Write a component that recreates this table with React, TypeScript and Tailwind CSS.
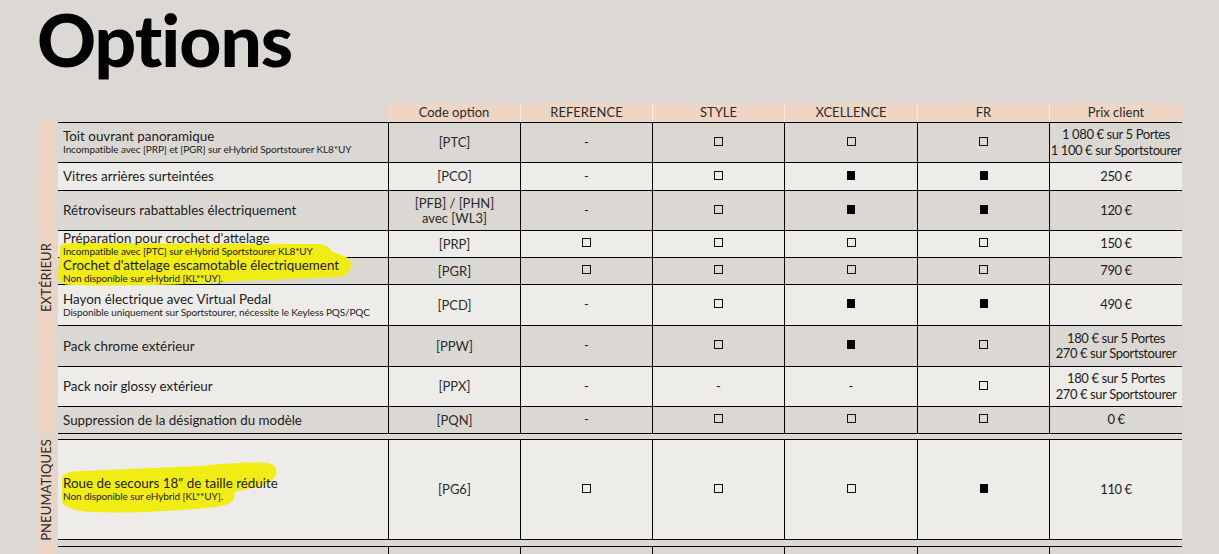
import React from 'react';

type Mark = 'o' | 'x' | '-';

interface Row {
    title: string;
    sub?: string;
    code: string[];
    marks: Mark[];
    price: string[];
    h: string;
    light?: boolean;
}

const exterieur: Row[] = [
    { title: 'Toit ouvrant panoramique', sub: 'Incompatible avec [PRP] et [PGR] sur eHybrid Sportstourer KL8*UY', code: ['[PTC]'], marks: ['-', 'o', 'o', 'o'], price: ['1 080 € sur 5 Portes', '1 100 € sur Sportstourer'], h: 'h-[40px]' },
    { title: 'Vitres arrières surteintées', code: ['[PCO]'], marks: ['-', 'o', 'x', 'x'], price: ['250 €'], h: 'h-[28px]', light: true },
    { title: 'Rétroviseurs rabattables électriquement', code: ['[PFB] / [PHN]', 'avec [WL3]'], marks: ['-', 'o', 'x', 'x'], price: ['120 €'], h: 'h-[40px]' },
    { title: "Préparation pour crochet d'attelage", sub: 'Incompatible avec [PTC] sur eHybrid Sportstourer KL8*UY', code: ['[PRP]'], marks: ['o', 'o', 'o', 'o'], price: ['150 €'], h: 'h-[27px]', light: true },
    { title: "Crochet d'attelage escamotable électriquement", sub: 'Non disponible sur eHybrid [KL**UY].', code: ['[PGR]'], marks: ['o', 'o', 'o', 'o'], price: ['790 €'], h: 'h-[27px]' },
    { title: 'Hayon électrique avec Virtual Pedal', sub: 'Disponible uniquement sur Sportstourer, nécessite le Keyless PQS/PQC', code: ['[PCD]'], marks: ['-', 'o', 'x', 'x'], price: ['490 €'], h: 'h-[41px]', light: true },
    { title: 'Pack chrome extérieur', code: ['[PPW]'], marks: ['-', 'o', 'x', 'o'], price: ['180 € sur 5 Portes', '270 € sur Sportstourer'], h: 'h-[41px]' },
    { title: 'Pack noir glossy extérieur', code: ['[PPX]'], marks: ['-', '-', '-', 'o'], price: ['180 € sur 5 Portes', '270 € sur Sportstourer'], h: 'h-[40px]', light: true },
    { title: 'Suppression de la désignation du modèle', code: ['[PQN]'], marks: ['-', 'o', 'o', 'o'], price: ['0 €'], h: 'h-[27px]' },
];

const pneus: Row[] = [
    { title: 'Roue de secours 18" de taille réduite', sub: 'Non disponible sur eHybrid [KL**UY].', code: ['[PG6]'], marks: ['o', 'o', 'o', 'x'], price: ['110 €'], h: 'h-[100px]', light: true },
];

const next: Row[] = [
    { title: '', code: [''], marks: ['-', '-', '-', '-'], price: [''], h: 'h-[40px]' },
];

const grid = 'grid grid-cols-[330px_132px_132px_132px_133px_132px_133px]';

function MarkCell({ m }: { m: Mark }) {
    if (m === '-') return <span className="text-[13px] text-[#222]">-</span>;
    if (m === 'x') return <span className="block w-[8px] h-[9px] bg-black -mt-[3px]" />;
    return <span className="block w-[9px] h-[9px] border border-[#111] -mt-[3px]" />;
}

function TableRow({ row, hideMarks }: { row: Row; hideMarks?: boolean }) {
    const bg = row.light ? 'bg-[#eeece9]' : 'bg-[#dbd8d3]';
    return (
        <div className={`${grid} ${row.h} ${bg} border-b border-black box-border`}>
            <div className="flex flex-col justify-center pl-[5px] leading-[1.12]">
                <span className="relative z-10 text-[13.4px] text-[#1c1c1c]">{row.title}</span>
                {row.sub && <span className="relative z-10 text-[10px] text-[#1c1c1c] tracking-[-0.1px]">{row.sub}</span>}
            </div>
            <div className="border-l border-black flex flex-col items-center justify-center text-[13px] text-[#2a2a2a] leading-[1.15]">
                {row.code.map((c, i) => <span key={i}>{c}</span>)}
            </div>
            {row.marks.map((m, i) => (
                <div key={i} className="border-l border-black flex items-center justify-center">
                    {!hideMarks && <MarkCell m={m} />}
                </div>
            ))}
            <div className="border-l border-black flex flex-col items-center justify-center text-[13px] text-[#1c1c1c] leading-[1.18] tracking-[-0.4px]">
                {row.price.map((p, i) => <span key={i}>{p}</span>)}
            </div>
        </div>
    );
}

function Section({ label, rows, hideMarks }: { label: string; rows: Row[]; hideMarks?: boolean }) {
    return (
        <div className="flex gap-[2px]">
            <div className="w-[19px] bg-[#edd3c2] flex items-center justify-center">
                <span className="[writing-mode:vertical-rl] rotate-180 text-[13px] text-[#2a2a2a] tracking-[0.1px]">{label}</span>
            </div>
            <div className="border-t border-black">
                {rows.map((r, i) => <TableRow key={i} row={r} hideMarks={hideMarks} />)}
            </div>
        </div>
    );
}

export default function App() {
    const headers = ['Code option', 'REFERENCE', 'STYLE', 'XCELLENCE', 'FR', 'Prix client'];
    return (
        <div className="relative min-h-screen bg-[#dcd9d5] font-['Lato',sans-serif] pl-[37px] overflow-hidden">
            <div className="h-[103px] pt-[8px]">
                <h1 className="text-[73px] leading-[0.85] font-black tracking-[-1px] text-black">Options</h1>
            </div>

            <div className={`${grid} ml-[21px] h-[19px]`}>
                <div />
                {headers.map((h, i) => (
                    <div key={h} className={`bg-[#efd5c4] flex items-center justify-center text-[13px] text-[#2a2a2a] ${i > 0 ? 'border-l border-[#f7efe9]' : ''}`}>
                        {h}
                    </div>
                ))}
            </div>

            <div className="flex flex-col gap-[5px]">
                <Section label="EXTÉRIEUR" rows={exterieur} />
                <Section label="PNEUMATIQUES" rows={pneus} />
                <Section label="" rows={next} hideMarks />
            </div>

            {/* marker highlights */}
            <svg className="absolute left-0 top-0 z-[5] pointer-events-none" width="1219" height="554">
                <path d="M60,247 Q60,243 72,243 L318,244 Q329,245 331,251 L344,256 Q352,259 351,266 Q350,276 338,277 L240,281 Q150,287 72,285 Q58,285 58,276 Z" fill="#f0ec14" />
                <path d="M62,478 Q64,471 82,471 L200,466 Q246,461 269,463 Q278,466 276,474 Q274,484 252,488 L234,492 Q238,504 216,507 Q150,514 92,512 Q62,510 62,500 Z" fill="#f0ec14" />
            </svg>
        </div>
    );
}
